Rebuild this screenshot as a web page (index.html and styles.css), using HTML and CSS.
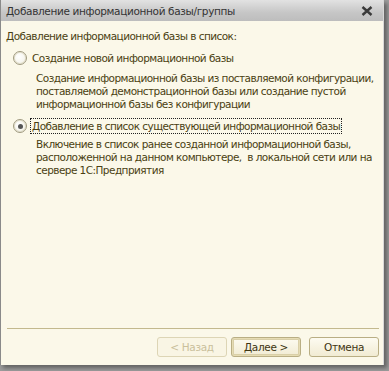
FILE: index.html
```html
<!DOCTYPE html>
<html lang="ru">
<head>
  <meta charset="UTF-8" />
  <title>Добавление информационной базы/группы</title>
  <link rel="stylesheet" href="styles.css">
</head>
<body>
  <div class="window">
    <div class="titlebar">
      <span class="title">Добавление информационной базы/группы</span>
      <svg class="close" width="12" height="10" viewBox="0 0 12 10">
        <path d="M1.5 1 L10.5 9 M10.5 1 L1.5 9" stroke="#3a3a3a" stroke-width="2.4" />
      </svg>
    </div>

    <div class="content">
      <div class="heading">Добавление информационной базы в список:</div>

      <div class="option">
        <label class="radio-row">
          <span class="radio"></span>
          <span class="label">Создание новой информационной базы</span>
        </label>
        <div class="desc">
          Создание информационной базы из поставляемой конфигурации,<br>
          поставляемой демонстрационной базы или создание пустой<br>
          информационной базы без конфигурации
        </div>
      </div>

      <div class="option second">
        <label class="radio-row">
          <span class="radio checked"></span>
          <span class="label focused">Добавление в список существующей информационной базы</span>
        </label>
        <div class="desc">
          Включение в список ранее созданной информационной базы,<br>
          расположенной на данном компьютере, &nbsp;в локальной сети или на<br>
          сервере 1С:Предприятия
        </div>
      </div>
    </div>

    <div class="footer">
      <button class="btn" disabled>&lt; Назад</button>
      <button class="btn default">Далее &gt;</button>
      <button class="btn cancel">Отмена</button>
    </div>
  </div>
</body>
</html>
```

FILE: styles.css
```css
body {
  margin: 0;
  background: #9c9c9c;
  font-family: "DejaVu Sans", sans-serif;
  font-size: 10.5px;
  color: #4a3f12;
  width: 389px;
  height: 371px;
  overflow: hidden;
}

.window {
  width: 382px;
  height: 365px;
  border-left: 1px solid #8a8a8a;
  border-right: 1px solid #d8d8d8;
  background: #fbf8e9;
  box-shadow: 3px 3px 4px rgba(60, 60, 60, 0.6);
  display: flex;
  flex-direction: column;
}

.titlebar {
  height: 21px;
  background: linear-gradient(#e2e2e2, #c6c6c6 60%, #bdbdbd);
  display: flex;
  align-items: center;
  justify-content: space-between;
  padding: 0 10px 0 5px;
  color: #333;
}

.title {
  letter-spacing: -0.35px;
}

.content {
  flex: 1;
  padding: 9px 5px 0 5px;
  letter-spacing: -0.55px;
  white-space: nowrap;
}

.heading {
  line-height: 13px;
}

.option {
  margin-top: 7px;
}

.option.second {
  margin-top: 7px;
}

.radio-row {
  display: flex;
  align-items: center;
  height: 16px;
  padding-left: 7px;
}

.radio {
  width: 12px;
  height: 12px;
  border: 1px solid #a09a80;
  border-radius: 50%;
  background: radial-gradient(circle at 40% 40%, #ffffff, #f0eee2);
  box-shadow: inset 0 0 0 1px #e4e0cc;
  margin-right: 3px;
  position: relative;
}

.radio.checked::after {
  content: "";
  position: absolute;
  left: 3.5px;
  top: 3.5px;
  width: 5px;
  height: 5px;
  border-radius: 50%;
  background: #555;
}

.label {
  padding: 1px 1px;
  border: 1px dotted transparent;
}

.label.focused {
  border-color: #222;
}

.desc {
  margin: 6px 0 0 30px;
  line-height: 13px;
}

.option.second .desc {
  margin-top: 4px;
}

.footer {
  margin: 0 4px 0 6px;
  border-top: 1px solid #c3b98e;
  height: 36px;
  display: flex;
  align-items: center;
  justify-content: flex-end;
  gap: 4px;
}

.btn {
  width: 70px;
  height: 20px;
  font-family: "DejaVu Sans", sans-serif;
  font-size: 10.5px;
  letter-spacing: -0.35px;
  color: #3e3512;
  border: 1px solid #b9ae84;
  border-radius: 3px;
  background: linear-gradient(#fdfbf1, #f1ebd3);
  padding: 0;
}

.btn:disabled {
  color: #c9bf9b;
  border-color: #ddd5b5;
  background: #f9f5e4;
}

.btn.default {
  box-shadow: inset 0 0 0 1px #e6dcb4, inset 0 0 0 2px #d9cfa8;
}

.btn.cancel {
  margin-left: 4px;
}
```
